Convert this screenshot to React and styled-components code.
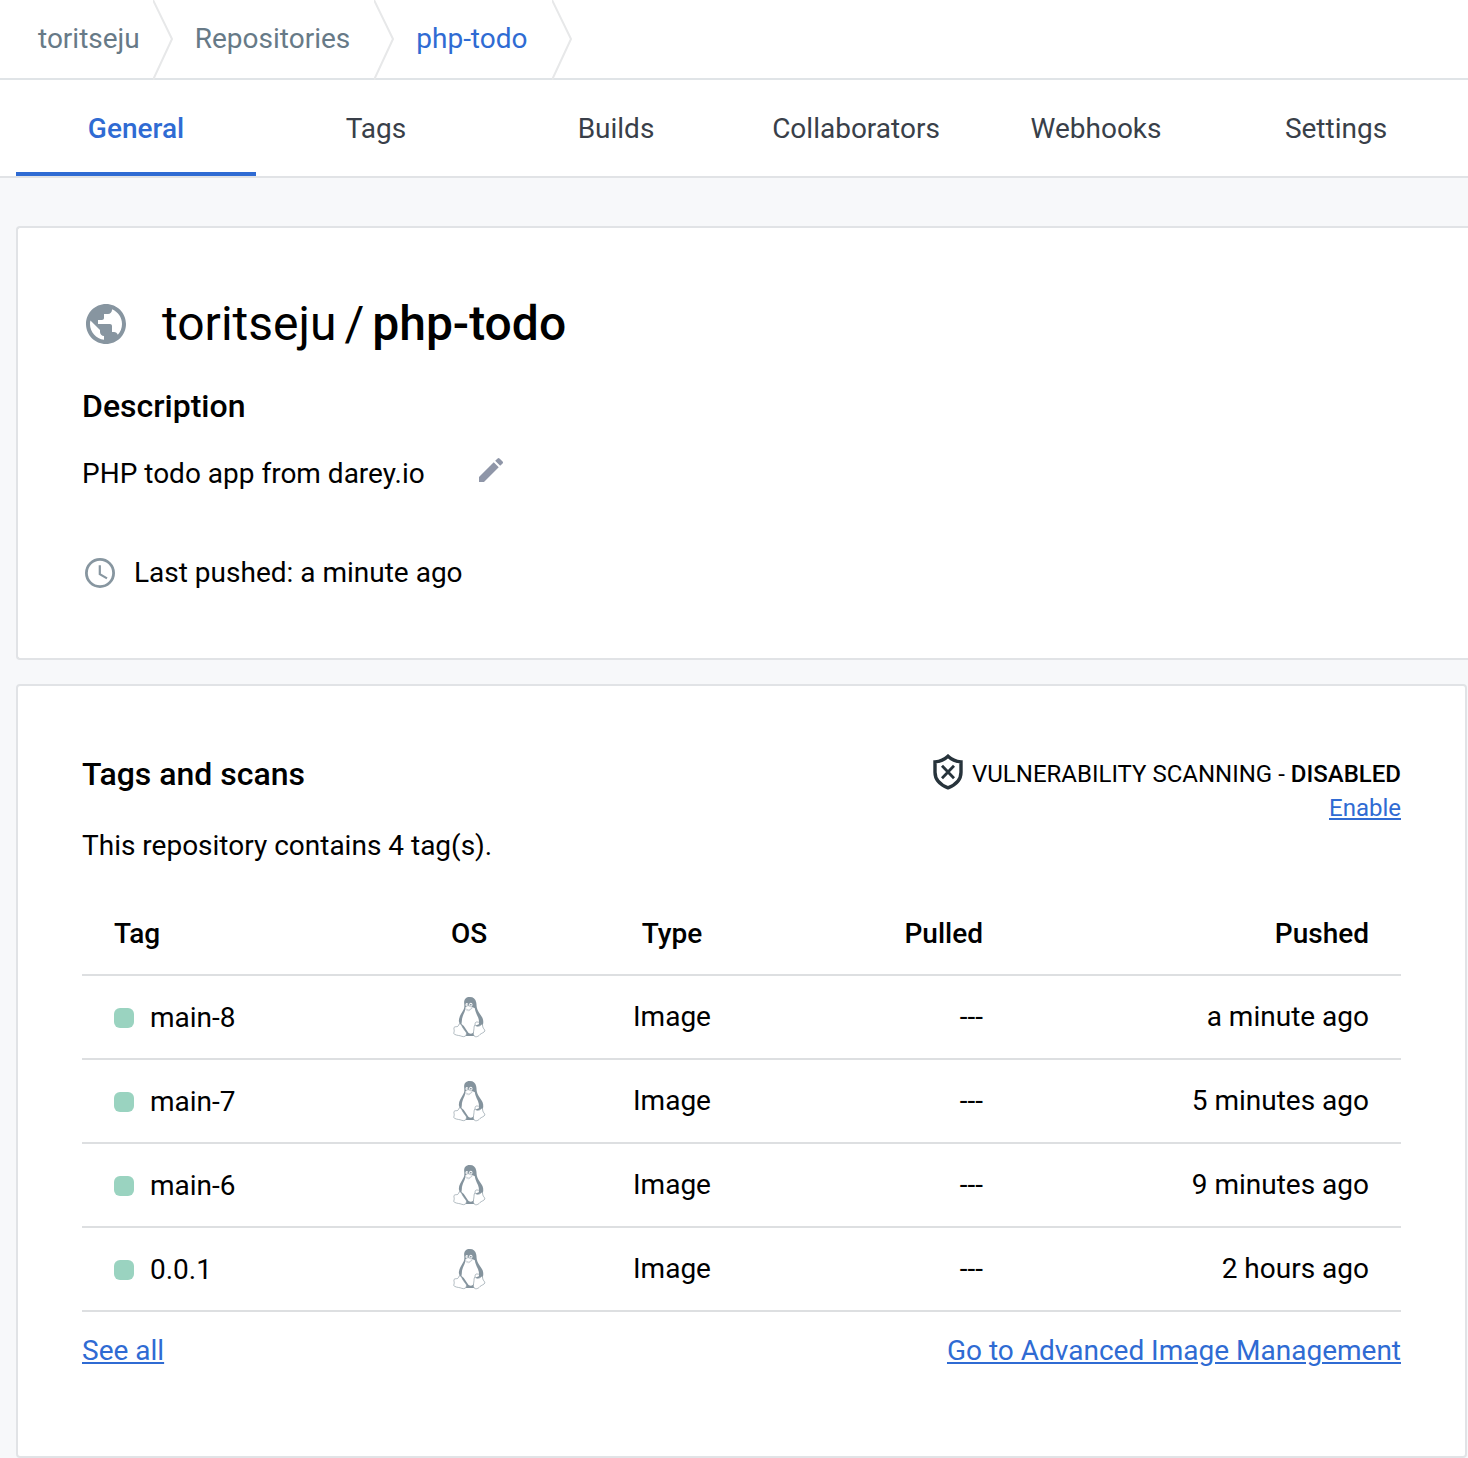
import React from 'react';
import styled, { createGlobalStyle } from 'styled-components';
import { MdPublic, MdEdit } from 'react-icons/md';

const GlobalStyle = createGlobalStyle`
  *, *::before, *::after { box-sizing: border-box; }
  body {
    margin: 0;
    background: #f7f8fa;
    color: #000;
    font-family: Roboto, "Liberation Sans", sans-serif;
    font-size: 28px;
    line-height: 36px;
  }
  h1, h2, p { margin: 0; }
  svg { display: block; flex: none; }
`;

const Breadcrumbs = styled.nav`
  display: flex;
  height: 80px;
  background: #fff;
  border-bottom: 2px solid #e0e4e7;
`;

const Crumb = styled.a`
  display: flex;
  align-items: center;
  padding: 0 ${(p) => (p.$first ? 13 : 24)}px 0 ${(p) => (p.$first ? 38 : 22)}px;
  color: ${(p) => (p.$current ? '#2f6bd3' : '#677a87')};
  text-decoration: none;
`;

const Chevron = styled.svg`
  width: 20px;
  height: 80px;
`;

const Tabs = styled.nav`
  display: flex;
  height: 98px;
  padding: 0 12px 0 16px;
  background: #fff;
  border-bottom: 2px solid #e1e3e6;
`;

const Tab = styled.a`
  flex: 1;
  display: flex;
  align-items: center;
  justify-content: center;
  padding-top: 6px;
  border-bottom: 4px solid ${(p) => (p.$active ? '#2f6bd3' : 'transparent')};
  color: ${(p) => (p.$active ? '#2f6bd3' : '#393f49')};
  font-weight: ${(p) => (p.$active ? 500 : 400)};
  text-decoration: none;
`;

const Main = styled.main`
  display: flex;
  flex-direction: column;
  gap: 24px;
  padding: 48px 0 0 16px;
`;

const Card = styled.section`
  background: #fff;
  border: 2px solid #e1e3e6;
  border-radius: 4px;
`;

const SummaryCard = styled(Card)`
  border-right: 0;
  border-radius: 4px 0 0 4px;
  padding: 64px 64px 67px;
`;

const TagsCard = styled(Card)`
  margin: 0 1px 1px 0;
  padding: 64px 64px 87px;
`;

const TitleRow = styled.div`
  display: flex;
  align-items: center;
  gap: 32px;
  height: 64px;
  color: #8795a0;
`;

const Title = styled.h1`
  display: flex;
  gap: 8px;
  color: #000;
  font-size: 48px;
  line-height: 64px;
  font-weight: 400;

  strong { font-weight: 500; }
`;

const Heading = styled.h2`
  font-size: 32px;
  line-height: 48px;
  font-weight: 500;
`;

const DescriptionBlock = styled.div`
  display: flex;
  flex-direction: column;
  gap: 24px;
  margin-top: 26px;
`;

const DescriptionRow = styled.div`
  display: flex;
  align-items: flex-end;
  gap: 50px;
`;

const EditButton = styled.button`
  margin: 0 0 6px;
  padding: 0;
  border: 0;
  background: none;
  color: #8f96a8;
  cursor: pointer;
`;

const PushedRow = styled.div`
  display: flex;
  align-items: center;
  gap: 16px;
  margin-top: 63px;
`;

const TagsHeader = styled.div`
  display: flex;
  justify-content: space-between;
`;

const TagsIntro = styled.div`
  display: flex;
  flex-direction: column;
  gap: 30px;
`;

const Scanning = styled.div`
  display: flex;
  flex-direction: column;
  align-items: flex-end;
  font-size: 24px;
  line-height: 32px;
`;

const ScanStatus = styled.p`
  display: flex;
  align-items: center;
  gap: 8px;
  height: 36px;
  margin-top: 6px;

  strong { font-weight: 500; }
`;

const Link = styled.a`
  color: #2f6bd3;
  text-decoration: underline;
`;

const TagTable = styled.table`
  width: 100%;
  margin-top: 28px;
  table-layout: fixed;
  border-collapse: separate;
  border-spacing: 0;
`;

const Col = styled.col`
  width: ${(p) => (p.$width ? `${p.$width}px` : 'auto')};
`;

const cell = ({ $align = 'left' }) => `
  height: 84px;
  text-align: ${$align};
  border-bottom: 2px solid #dddfe1;
`;

const Th = styled.th`
  ${cell}
  padding: 2px 32px 0;
  font-weight: 500;
`;

const Td = styled.td`
  ${cell}
  padding: 0 32px;
`;

const TagName = styled.span`
  display: flex;
  align-items: center;
  gap: 16px;
  padding-top: 2px;
`;

const Status = styled.span`
  width: 20px;
  height: 20px;
  border-radius: 6px;
  background: #9ad3c0;
`;

const PenguinArt = styled.svg`
  width: 33px;
  height: 42px;
  margin: 0 auto;
`;

const CardFooter = styled.div`
  display: flex;
  justify-content: space-between;
  margin-top: 21px;
`;

function Separator() {
  return (
    <Chevron viewBox="0 0 20 80" aria-hidden="true">
      <path d="M0 0 19 39 0 80" fill="#fff" stroke="#e7e8e9" strokeWidth="2" />
    </Chevron>
  );
}

function Clock() {
  return (
    <svg width="36" height="36" viewBox="0 0 36 36" fill="none" stroke="#8796a0" aria-hidden="true">
      <circle cx="18" cy="18" r="13.6" strokeWidth="2.8" />
      <path d="M17.8 10.2v9l7.2 4.2" strokeWidth="2.2" />
    </svg>
  );
}

function ShieldOff() {
  return (
    <svg width="32" height="40" viewBox="0 0 32 40" fill="none" stroke="#27333b" aria-hidden="true">
      <path d="M16 2.2C12.600 5.400 8 7.400 3 7.900v10.300c0 7.200 5.200 12.600 13 15.600 7.800-3 13-8.400 13-15.600V7.900C24 7.400 19.400 5.400 16 2.200Z" strokeWidth="3.400" />
      <path d="m10 11.800 12 12.400m0-12.400L10 24.200" strokeWidth="2.800" />
    </svg>
  );
}

function Penguin() {
  return (
    <PenguinArt viewBox="15 14 96 126" role="img" aria-label="Linux">
      <path
        d="M64 17c-12 0-18 7-17 19 1 10 1 14-3 21-6 11-13 20-13 32l4 14 16 31h26l12-20 10-6c6-7 7-18 3-28-4-9-11-16-15-25-4-9-2-14-4-22-2-10-8-16-19-16Z"
        fill="#84939d"
      />
      <path
        d="M51 48c0 8-2 13-6 21-3 8-5 13-5 20l-1 9 7 6 12 18c3 5 10 7 16 2l4-8 5-14 8-3c2-10-1-20-6-29-3-7-5-11-6-19l-10-5Z"
        fill="#fff"
      />
      <ellipse cx="55" cy="40" rx="4" ry="5" fill="#fff" />
      <ellipse cx="67" cy="40" rx="5" ry="6" fill="#fff" />
      <circle cx="56" cy="41" r="2" fill="#84939d" />
      <circle cx="67" cy="40" r="2.5" fill="#84939d" />
      <path d="M51 49c4-5 8-7 12-4l9 4-8 8c-5 3-9 0-13-3Z" fill="#fff" stroke="#a8b3ba" strokeWidth="1.500" />
      <path d="m53 53 8 3 9-5" fill="none" stroke="#a8b3ba" strokeWidth="1.500" />
      <g fill="#fff" stroke="#8a98a2" strokeWidth="2" strokeLinejoin="round">
        <path d="M34 97c-4 1-3 6-6 8-4 2-9 0-11 3-2 4 1 8 0 12s-2 7 1 9c8 4 16 3 22 6 7 3 14-1 14-8 0-5-5-9-9-15-4-5-6-15-11-15Z" />
        <path d="M79 101c-3 3-2 9-3 15-1 7-3 13 1 18 5 5 13 1 17-4 5-5 13-6 15-11 1-4-5-7-6-12-1-4 0-7-4-8-3 5-13 9-20 2Z" />
        <path d="M80 101c-1-6 1-10 6-9 5 0 9 2 12 7" fill="none" />
      </g>
    </PenguinArt>
  );
}

const tabs = ['General', 'Tags', 'Builds', 'Collaborators', 'Webhooks', 'Settings'];

const tags = [
  { name: 'main-8', pushed: 'a minute ago' },
  { name: 'main-7', pushed: '5 minutes ago' },
  { name: 'main-6', pushed: '9 minutes ago' },
  { name: '0.0.1', pushed: '2 hours ago' },
];

export default function App() {
  return (
    <>
      <GlobalStyle />
      <Breadcrumbs aria-label="Breadcrumb">
        <Crumb href="#user" $first>toritseju</Crumb>
        <Separator />
        <Crumb href="#repositories">Repositories</Crumb>
        <Separator />
        <Crumb href="#php-todo" $current aria-current="page">php-todo</Crumb>
        <Separator />
      </Breadcrumbs>
      <Tabs aria-label="Repository sections">
        {tabs.map((name, i) => (
          <Tab key={name} href={`#${name.toLowerCase()}`} $active={i === 0}>{name}</Tab>
        ))}
      </Tabs>
      <Main>
        <SummaryCard>
          <TitleRow>
            <MdPublic size={48} aria-hidden="true" />
            <Title>
              <span>toritseju</span>
              <span>/</span>
              <strong>php-todo</strong>
            </Title>
          </TitleRow>
          <DescriptionBlock>
            <Heading>Description</Heading>
            <DescriptionRow>
              <p>PHP todo app from darey.io</p>
              <EditButton type="button" aria-label="Edit description">
                <MdEdit size={32} />
              </EditButton>
            </DescriptionRow>
          </DescriptionBlock>
          <PushedRow>
            <Clock />
            <p>Last pushed: a minute ago</p>
          </PushedRow>
        </SummaryCard>
        <TagsCard>
          <TagsHeader>
            <TagsIntro>
              <Heading>Tags and scans</Heading>
              <p>This repository contains 4 tag(s).</p>
            </TagsIntro>
            <Scanning>
              <ScanStatus>
                <ShieldOff />
                <span>VULNERABILITY SCANNING - <strong>DISABLED</strong></span>
              </ScanStatus>
              <Link href="#enable">Enable</Link>
            </Scanning>
          </TagsHeader>
          <TagTable>
            <colgroup>
              <Col $width={304} />
              <Col $width={166} />
              <Col $width={240} />
              <Col $width={223} />
              <Col />
            </colgroup>
            <thead>
              <tr>
                <Th scope="col">Tag</Th>
                <Th scope="col" $align="center">OS</Th>
                <Th scope="col" $align="center">Type</Th>
                <Th scope="col" $align="right">Pulled</Th>
                <Th scope="col" $align="right">Pushed</Th>
              </tr>
            </thead>
            <tbody>
              {tags.map((tag) => (
                <tr key={tag.name}>
                  <Td><TagName><Status />{tag.name}</TagName></Td>
                  <Td $align="center"><Penguin /></Td>
                  <Td $align="center">Image</Td>
                  <Td $align="right">---</Td>
                  <Td $align="right">{tag.pushed}</Td>
                </tr>
              ))}
            </tbody>
          </TagTable>
          <CardFooter>
            <Link href="#all">See all</Link>
            <Link href="#manage">Go to Advanced Image Management</Link>
          </CardFooter>
        </TagsCard>
      </Main>
    </>
  );
}
